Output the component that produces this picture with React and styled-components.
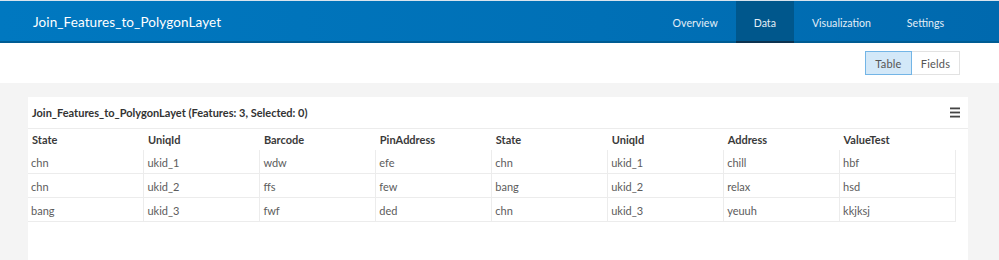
import React from "react";
import styled, { createGlobalStyle } from "styled-components";

const GlobalStyle = createGlobalStyle`
  html, body { margin: 0; padding: 0; }
  body {
    background: #f4f4f4;
    font-family: Lato, "Open Sans", "Liberation Sans", sans-serif;
    color: #333;
  }
`;

const TopBar = styled.header`
  display: flex;
  align-items: stretch;
  height: 40px;
  border-top: 1px solid #d9e4ee;
  border-bottom: 2px solid #005c93;
  background: linear-gradient(90deg, #0078c0 0%, #0070b6 60%, #0069ae 100%);
  padding-left: 33px;
`;

const Title = styled.div`
  display: flex;
  align-items: center;
  padding-top: 1px;
  color: #fff;
  font-size: 13.5px;
  letter-spacing: 0.1px;
`;

const Nav = styled.nav`
  margin-left: auto;
  margin-right: 37px;
  display: flex;
  align-items: stretch;
`;

const NavItem = styled.div`
  display: flex;
  align-items: center;
  padding: 1px 18px 0;
  margin-bottom: -2px;
  font-size: 10.6px;
  color: #e3eef7;
  background: ${(p) => (p.$active ? "#00578c" : "transparent")};
  box-shadow: ${(p) => (p.$active ? "inset 0 -2px 0 #0d3350" : "none")};
`;

const Toolbar = styled.div`
  display: flex;
  justify-content: flex-end;
  align-items: center;
  height: 40px;
  background: #fff;
  padding-right: 39px;
`;

const ToggleGroup = styled.div`
  display: flex;
`;

const Toggle = styled.div`
  display: flex;
  align-items: center;
  justify-content: center;
  box-sizing: border-box;
  height: 24px;
  width: ${(p) => p.$w}px;
  font-size: 11px;
  letter-spacing: 0.2px;
  color: #555;
  background: ${(p) => (p.$active ? "#d3e8f8" : "#fff")};
  border: 1px solid ${(p) => (p.$active ? "#73b5e6" : "#e2e2e2")};
  ${(p) => (p.$active ? "" : "border-left: none;")}
`;

const Content = styled.main`
  padding: 14px 31px 0 28px;
`;

const Card = styled.section`
  background: #fff;
  height: 163px;
`;

const CardHeader = styled.div`
  display: flex;
  align-items: center;
  justify-content: space-between;
  height: 31px;
  padding: 0 8px 0 4px;
  border-bottom: 1px solid #ececec;
`;

const CardTitle = styled.div`
  font-size: 11px;
  font-weight: 700;
  color: #333;
`;

const Table = styled.table`
  width: 928px;
  table-layout: fixed;
  border-collapse: collapse;
  font-size: 11px;
`;

const Th = styled.th`
  height: 21px;
  padding: 0 4px;
  text-align: left;
  font-weight: 700;
  color: #3a3a3a;
`;

const Td = styled.td`
  height: 22px;
  padding: 1px 3px 0;
  color: #5c5c5c;
  border-bottom: 1px solid #ececec;
  border-right: 1px solid #ececec;
`;

const columns = ["State", "UniqId", "Barcode", "PinAddress", "State", "UniqId", "Address", "ValueTest"];
const rows = [
  ["chn", "ukid_1", "wdw", "efe", "chn", "ukid_1", "chill", "hbf"],
  ["chn", "ukid_2", "ffs", "few", "bang", "ukid_2", "relax", "hsd"],
  ["bang", "ukid_3", "fwf", "ded", "chn", "ukid_3", "yeuuh", "kkjksj"],
];

const MenuIcon = () => (
  <svg width="10" height="11" viewBox="0 0 10 11">
    <rect x="0" y="0.5" width="10" height="1.8" fill="#444" />
    <rect x="0" y="4.6" width="10" height="1.8" fill="#444" />
    <rect x="0" y="8.7" width="10" height="1.8" fill="#444" />
  </svg>
);

export default function App() {
  return (
    <>
      <GlobalStyle />
      <TopBar>
        <Title>Join_Features_to_PolygonLayet</Title>
        <Nav>
          <NavItem>Overview</NavItem>
          <NavItem $active>Data</NavItem>
          <NavItem>Visualization</NavItem>
          <NavItem>Settings</NavItem>
        </Nav>
      </TopBar>
      <Toolbar>
        <ToggleGroup>
          <Toggle $active $w={47}>Table</Toggle>
          <Toggle $w={48}>Fields</Toggle>
        </ToggleGroup>
      </Toolbar>
      <Content>
        <Card>
          <CardHeader>
            <CardTitle>Join_Features_to_PolygonLayet (Features: 3, Selected: 0)</CardTitle>
            <MenuIcon />
          </CardHeader>
          <Table>
            <thead>
              <tr>
                {columns.map((c, i) => (
                  <Th key={i}>{c}</Th>
                ))}
              </tr>
            </thead>
            <tbody>
              {rows.map((r, i) => (
                <tr key={i}>
                  {r.map((v, j) => (
                    <Td key={j}>{v}</Td>
                  ))}
                </tr>
              ))}
            </tbody>
          </Table>
        </Card>
      </Content>
    </>
  );
}
